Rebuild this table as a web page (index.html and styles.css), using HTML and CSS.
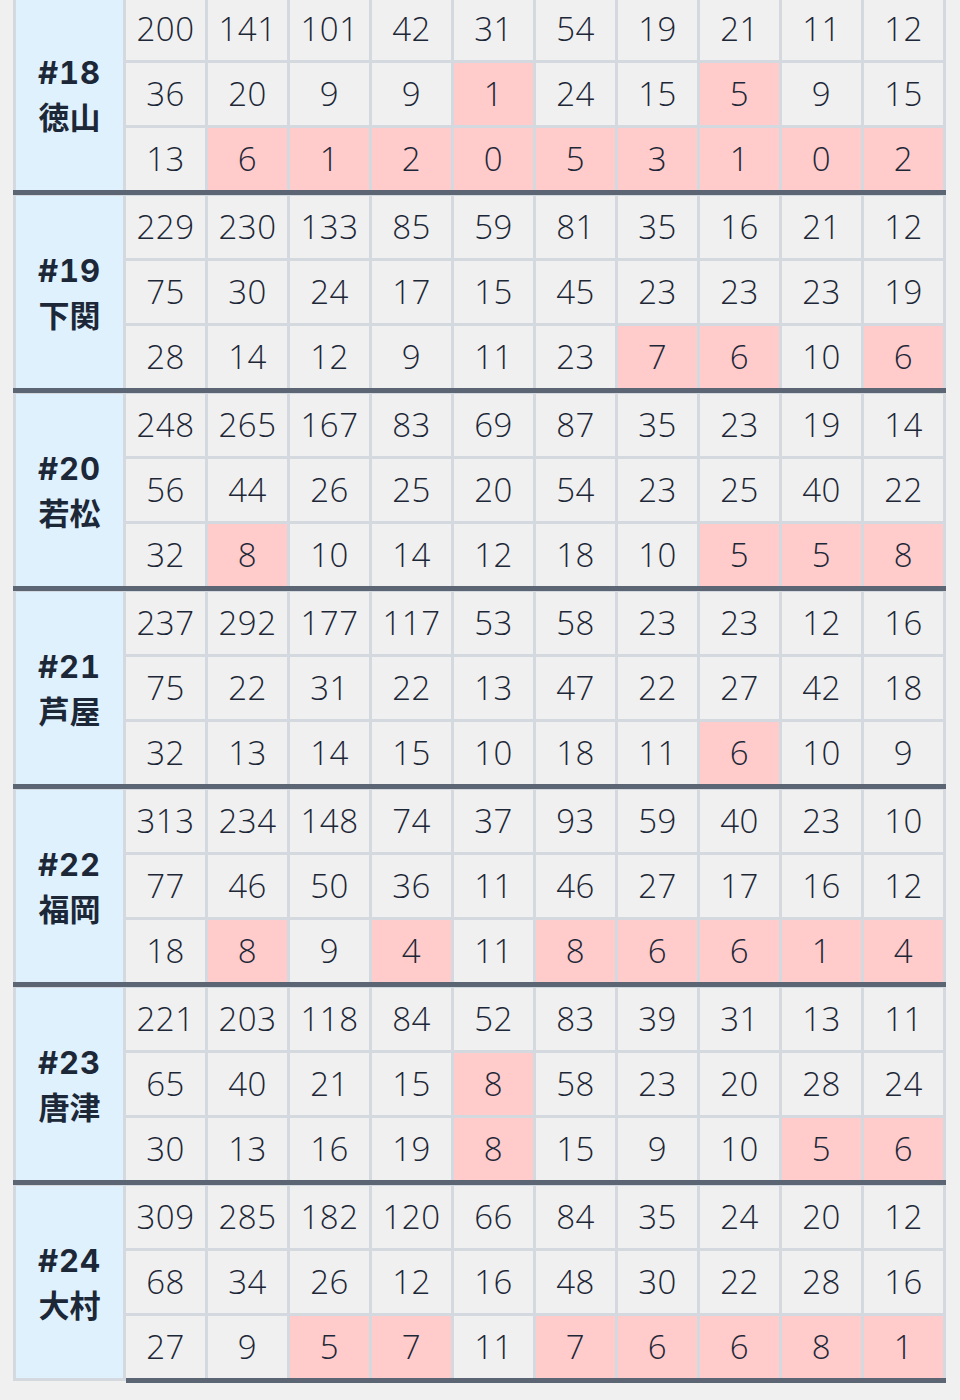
FILE: index.html
```html
<!DOCTYPE html>
<html lang="ja">
<head>
<meta charset="utf-8">
<title>場別成績</title>
<link rel="stylesheet" href="styles.css">
</head>
<body>
<div class="board">
  <div class="group">
    <div class="h"><span>#18</span><span>徳山</span></div>
    <div class="c">200</div><div class="c">141</div><div class="c">101</div><div class="c">42</div><div class="c">31</div><div class="c">54</div><div class="c">19</div><div class="c">21</div><div class="c">11</div><div class="c">12</div>
    <div class="c">36</div><div class="c">20</div><div class="c">9</div><div class="c">9</div><div class="c low">1</div><div class="c">24</div><div class="c">15</div><div class="c low">5</div><div class="c">9</div><div class="c">15</div>
    <div class="c">13</div><div class="c low">6</div><div class="c low">1</div><div class="c low">2</div><div class="c low">0</div><div class="c low">5</div><div class="c low">3</div><div class="c low">1</div><div class="c low">0</div><div class="c low">2</div>
  </div>
  <div class="group">
    <div class="h"><span>#19</span><span>下関</span></div>
    <div class="c">229</div><div class="c">230</div><div class="c">133</div><div class="c">85</div><div class="c">59</div><div class="c">81</div><div class="c">35</div><div class="c">16</div><div class="c">21</div><div class="c">12</div>
    <div class="c">75</div><div class="c">30</div><div class="c">24</div><div class="c">17</div><div class="c">15</div><div class="c">45</div><div class="c">23</div><div class="c">23</div><div class="c">23</div><div class="c">19</div>
    <div class="c">28</div><div class="c">14</div><div class="c">12</div><div class="c">9</div><div class="c">11</div><div class="c">23</div><div class="c low">7</div><div class="c low">6</div><div class="c">10</div><div class="c low">6</div>
  </div>
  <div class="group">
    <div class="h"><span>#20</span><span>若松</span></div>
    <div class="c">248</div><div class="c">265</div><div class="c">167</div><div class="c">83</div><div class="c">69</div><div class="c">87</div><div class="c">35</div><div class="c">23</div><div class="c">19</div><div class="c">14</div>
    <div class="c">56</div><div class="c">44</div><div class="c">26</div><div class="c">25</div><div class="c">20</div><div class="c">54</div><div class="c">23</div><div class="c">25</div><div class="c">40</div><div class="c">22</div>
    <div class="c">32</div><div class="c low">8</div><div class="c">10</div><div class="c">14</div><div class="c">12</div><div class="c">18</div><div class="c">10</div><div class="c low">5</div><div class="c low">5</div><div class="c low">8</div>
  </div>
  <div class="group">
    <div class="h"><span>#21</span><span>芦屋</span></div>
    <div class="c">237</div><div class="c">292</div><div class="c">177</div><div class="c">117</div><div class="c">53</div><div class="c">58</div><div class="c">23</div><div class="c">23</div><div class="c">12</div><div class="c">16</div>
    <div class="c">75</div><div class="c">22</div><div class="c">31</div><div class="c">22</div><div class="c">13</div><div class="c">47</div><div class="c">22</div><div class="c">27</div><div class="c">42</div><div class="c">18</div>
    <div class="c">32</div><div class="c">13</div><div class="c">14</div><div class="c">15</div><div class="c">10</div><div class="c">18</div><div class="c">11</div><div class="c low">6</div><div class="c">10</div><div class="c">9</div>
  </div>
  <div class="group">
    <div class="h"><span>#22</span><span>福岡</span></div>
    <div class="c">313</div><div class="c">234</div><div class="c">148</div><div class="c">74</div><div class="c">37</div><div class="c">93</div><div class="c">59</div><div class="c">40</div><div class="c">23</div><div class="c">10</div>
    <div class="c">77</div><div class="c">46</div><div class="c">50</div><div class="c">36</div><div class="c">11</div><div class="c">46</div><div class="c">27</div><div class="c">17</div><div class="c">16</div><div class="c">12</div>
    <div class="c">18</div><div class="c low">8</div><div class="c">9</div><div class="c low">4</div><div class="c">11</div><div class="c low">8</div><div class="c low">6</div><div class="c low">6</div><div class="c low">1</div><div class="c low">4</div>
  </div>
  <div class="group">
    <div class="h"><span>#23</span><span>唐津</span></div>
    <div class="c">221</div><div class="c">203</div><div class="c">118</div><div class="c">84</div><div class="c">52</div><div class="c">83</div><div class="c">39</div><div class="c">31</div><div class="c">13</div><div class="c">11</div>
    <div class="c">65</div><div class="c">40</div><div class="c">21</div><div class="c">15</div><div class="c low">8</div><div class="c">58</div><div class="c">23</div><div class="c">20</div><div class="c">28</div><div class="c">24</div>
    <div class="c">30</div><div class="c">13</div><div class="c">16</div><div class="c">19</div><div class="c low">8</div><div class="c">15</div><div class="c">9</div><div class="c">10</div><div class="c low">5</div><div class="c low">6</div>
  </div>
  <div class="group">
    <div class="h"><span>#24</span><span>大村</span></div>
    <div class="c">309</div><div class="c">285</div><div class="c">182</div><div class="c">120</div><div class="c">66</div><div class="c">84</div><div class="c">35</div><div class="c">24</div><div class="c">20</div><div class="c">12</div>
    <div class="c">68</div><div class="c">34</div><div class="c">26</div><div class="c">12</div><div class="c">16</div><div class="c">48</div><div class="c">30</div><div class="c">22</div><div class="c">28</div><div class="c">16</div>
    <div class="c">27</div><div class="c">9</div><div class="c low">5</div><div class="c low">7</div><div class="c">11</div><div class="c low">7</div><div class="c low">6</div><div class="c low">6</div><div class="c low">8</div><div class="c low">1</div>
  </div>
  <div class="foot"><div class="foot-head"></div><div class="foot-data"></div></div>
</div>
</body>
</html>
```

FILE: styles.css
```css
html, body {
  margin: 0;
  padding: 0;
  background: #f0f0f0;
}

body {
  font-family: Inter, "Noto Sans CJK JP", sans-serif;
  color: #1c2737;
}

.board {
  width: 933px;
  margin: -2px 0 0 13px;
}

.group {
  display: grid;
  grid-template-columns: 107px repeat(10, 1fr);
  grid-template-rows: repeat(3, 62px);
  gap: 3px;
  padding: 0 3px;
  background: #d3d9df;
}

.group + .group {
  border-top: 5px solid #5c6573;
  padding-top: 1px;
}

.h {
  grid-row: span 3;
  background: #dff1fd;
  display: flex;
  flex-direction: column;
  align-items: center;
  justify-content: center;
  font-size: 31px;
  font-weight: 700;
  line-height: 45px;
  padding-top: 2px;
  font-variant-numeric: tabular-nums;
}

.h span:first-child {
  letter-spacing: 1px;
}

.c {
  background: #f0f0f0;
  display: flex;
  align-items: center;
  justify-content: center;
  font-family: "Open Sans", Inter, sans-serif;
  font-size: 33px;
  font-weight: 300;
  line-height: 1;
  letter-spacing: 0.5px;
  padding-bottom: 1px;
}

.c.low {
  background: #ffcbcb;
}

.foot {
  display: flex;
  height: 5px;
}

.foot-head {
  width: 113px;
  height: 3px;
  background: #d3d9df;
}

.foot-data {
  flex: 1;
  background: #5c6573;
}
```
